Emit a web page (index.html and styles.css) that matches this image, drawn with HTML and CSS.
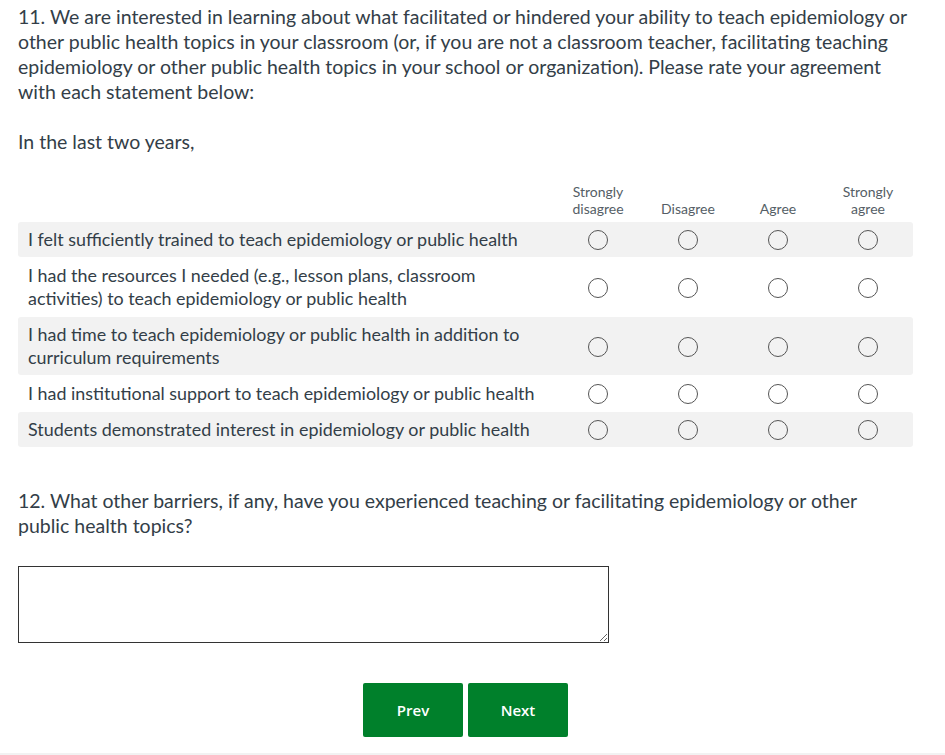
FILE: index.html
```html
<!DOCTYPE html>
<html lang="en">

<head>
    <meta charset="utf-8">
    <title>Survey</title>
    <link rel="stylesheet" href="styles.css">
</head>

<body>
    <div class="survey">
        <div class="question">
            <h2 class="question-title">11. We are interested in learning about what facilitated or hindered your ability to teach epidemiology or other public health topics in your classroom (or, if you are not a classroom teacher, facilitating teaching epidemiology or other public health topics in your school or organization). Please rate your agreement with each statement below:<br><br>In the last two years,</h2>

            <table class="matrix">
                <thead>
                    <tr>
                        <th class="row-label"></th>
                        <th>Strongly<br>disagree</th>
                        <th>Disagree</th>
                        <th>Agree</th>
                        <th>Strongly<br>agree</th>
                    </tr>
                </thead>
                <tbody>
                    <tr class="shaded">
                        <td class="row-label">I felt sufficiently trained to teach epidemiology or public health</td>
                        <td><span class="radio"></span></td>
                        <td><span class="radio"></span></td>
                        <td><span class="radio"></span></td>
                        <td><span class="radio"></span></td>
                    </tr>
                    <tr>
                        <td class="row-label">I had the resources I needed (e.g., lesson plans, classroom activities) to teach epidemiology or public health</td>
                        <td><span class="radio"></span></td>
                        <td><span class="radio"></span></td>
                        <td><span class="radio"></span></td>
                        <td><span class="radio"></span></td>
                    </tr>
                    <tr class="shaded">
                        <td class="row-label">I had time to teach epidemiology or public health in addition to curriculum requirements</td>
                        <td><span class="radio"></span></td>
                        <td><span class="radio"></span></td>
                        <td><span class="radio"></span></td>
                        <td><span class="radio"></span></td>
                    </tr>
                    <tr>
                        <td class="row-label">I had institutional support to teach epidemiology or public health</td>
                        <td><span class="radio"></span></td>
                        <td><span class="radio"></span></td>
                        <td><span class="radio"></span></td>
                        <td><span class="radio"></span></td>
                    </tr>
                    <tr class="shaded">
                        <td class="row-label">Students demonstrated interest in epidemiology or public health</td>
                        <td><span class="radio"></span></td>
                        <td><span class="radio"></span></td>
                        <td><span class="radio"></span></td>
                        <td><span class="radio"></span></td>
                    </tr>
                </tbody>
            </table>
        </div>

        <div class="question">
            <h2 class="question-title">12. What other barriers, if any, have you experienced teaching or facilitating epidemiology or other public health topics?</h2>
            <textarea class="answer" rows="3"></textarea>
        </div>

        <div class="nav-buttons">
            <button class="btn">Prev</button>
            <button class="btn">Next</button>
        </div>
    </div>
    <div class="footer-line"></div>
</body>

</html>
```

FILE: styles.css
```css
body {
    margin: 0;
    font-family: Lato, "Open Sans", sans-serif;
    color: #333e48;
    background-color: #ffffff;
}

.survey {
    padding: 4px 32px 0 18px;
}

.question-title {
    margin: 0;
    font-size: 19.5px;
    font-weight: normal;
    line-height: 25px;
}

.matrix {
    width: 100%;
    margin-top: 28px;
    border-collapse: separate;
    border-spacing: 0 1px;

    th {
        width: 90px;
        font-size: 14px;
        font-weight: normal;
        line-height: 17px;
        color: #555e66;
        vertical-align: bottom;
        padding: 0 0 4px 0;
    }

    td {
        text-align: center;
        vertical-align: middle;
        padding: 0;
    }

    .row-label {
        width: auto;
        text-align: left;
        font-size: 17.9px;
        line-height: 23px;
        padding: 6px 10px;
    }

    tr.shaded td {
        background-color: #f2f2f2;
    }

    tr.shaded td:first-child {
        border-radius: 3px 0 0 3px;
    }

    tr.shaded td:last-child {
        border-radius: 0 3px 3px 0;
    }
}

.radio {
    display: inline-block;
    width: 18px;
    height: 18px;
    border: 1.5px solid #555;
    border-radius: 50%;
    vertical-align: middle;
}

.question + .question {
    margin-top: 40px;
}

.answer {
    display: block;
    box-sizing: border-box;
    width: 591px;
    height: 77px;
    margin-top: 28px;
    border: 1px solid #333;
    border-radius: 0;
    resize: vertical;
}

.nav-buttons {
    display: flex;
    justify-content: center;
    gap: 5px;
    margin-top: 40px;
}

.btn {
    width: 100px;
    height: 54px;
    border: none;
    border-radius: 2px;
    background-color: #00802b;
    color: #fff;
    font-family: "Open Sans", sans-serif;
    font-size: 15px;
    font-weight: 600;
}

.footer-line {
    margin-top: 16px;
    height: 3px;
    background-color: #f2f2f2;
}
```
